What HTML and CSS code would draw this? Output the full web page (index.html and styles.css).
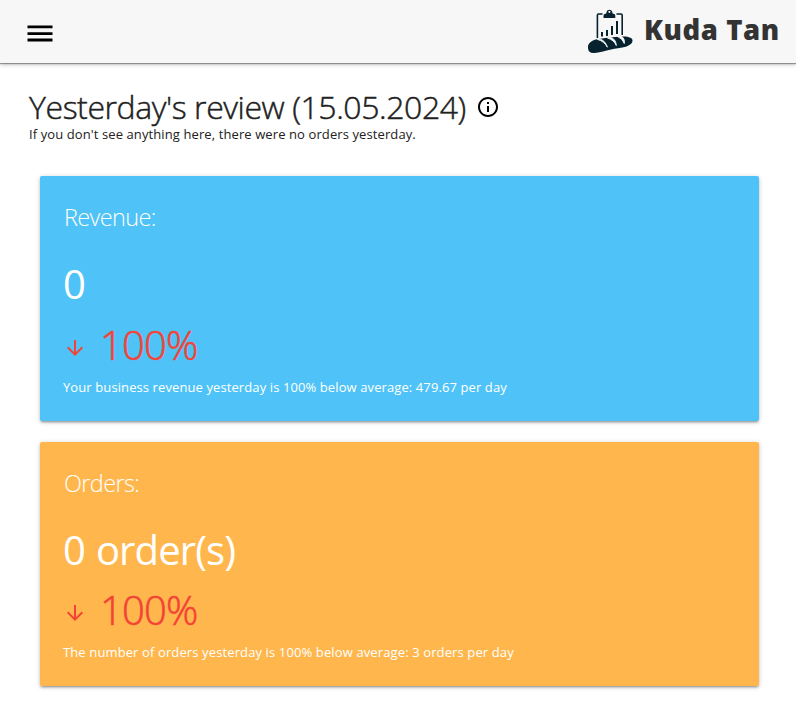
FILE: index.html
```html
<!DOCTYPE html>
<html lang="en">
<head>
<meta charset="utf-8">
<title>Kuda Tan</title>
<link rel="stylesheet" href="styles.css">
</head>
<body>
<header class="navbar">
  <svg class="menu" viewBox="0 0 26 18" width="26" height="18" aria-label="Menu"><path d="M0.5 0.5h25v2.800h-25zM0.5 7.200h25v2.800h-25zM0.5 13.600h25v2.800h-25z"/></svg>
  <div class="brand">
    <svg class="logo" viewBox="0 0 46 46" width="46" height="46" aria-hidden="true">
      <path class="board" d="M15.500 5H11.500Q10.400 5 10.400 6.200V29M29.500 5h4.300Q35.200 5 35.200 6.200V26"/>
      <path class="ink" d="M16.500 9V6.700Q16.500 4.900 18.500 4.800Q19.800 4.600 19.500 3A3 3 0 0 1 25.300 3Q25 4.600 26.300 4.800Q28.300 4.900 28.300 6.700V9ZM22.400 1.700a1.100 1.100 0 1 0 .01 0Z" fill-rule="evenodd"/>
      <path class="ink" d="M14 23h2v4.500h-2zM19 21h2v6h-2zM24 17h2v9h-2zM29 12h2v13h-2z"/>
      <path class="ink" d="M1 39C.5 35 4 31.500 10 30.300C19 28.700 27 28 34 27.500C41 27 46 28.500 45.500 32C45 36 39 38.500 31 39.200C21 40.200 14 43.700 7 44C3 44.200 1.300 42.500 1 39Z"/>
      <path class="cut" d="M10.500 30.500Q17 32 20.400 38.200Q18.500 32 13.500 30.200ZM20.500 29Q27 31 29.300 36.500Q29 30.500 24 28.500ZM30.500 27.500Q35.500 29.500 37.300 34.500Q38 29 34 27.300Z"/>
    </svg>
    <span class="name">Kuda Tan</span>
  </div>
</header>
<main class="page">
  <div class="heading">
    <h1 class="title">Yesterday's review (15.05.2024)</h1>
    <svg class="info" viewBox="0 0 24 24" width="24" height="24" aria-hidden="true"><path d="M11 7h2v2h-2zm0 4h2v6h-2zm1-9C6.480 2 2 6.480 2 12s4.480 10 10 10 10-4.480 10-10S17.520 2 12 2zm0 18c-4.410 0-8-3.590-8-8s3.590-8 8-8 8 3.590 8 8-3.590 8-8 8z"/></svg>
  </div>
  <p class="hint">If you don't see anything here, there were no orders yesterday.</p>
  <section class="card revenue">
    <h2 class="label">Revenue:</h2>
    <p class="value">0</p>
    <div class="change">
      <svg class="arrow" viewBox="0 0 24 24" width="24" height="24" aria-hidden="true"><path d="M20 12l-1.410-1.410L13 16.170V4h-2v12.170l-5.580-5.590L4 12l8 8 8-8z"/></svg>
      <span class="percent">100%</span>
    </div>
    <p class="note">Your business revenue yesterday is 100% below average: 479.67 per day</p>
  </section>
  <section class="card orders">
    <h2 class="label">Orders:</h2>
    <p class="value">0 order(s)</p>
    <div class="change">
      <svg class="arrow" viewBox="0 0 24 24" width="24" height="24" aria-hidden="true"><path d="M20 12l-1.410-1.410L13 16.170V4h-2v12.170l-5.580-5.590L4 12l8 8 8-8z"/></svg>
      <span class="percent">100%</span>
    </div>
    <p class="note">The number of orders yesterday is 100% below average: 3 orders per day</p>
  </section>
</main>
</body>
</html>
```
FILE: styles.css
```css
* { box-sizing: border-box; }
body { margin: 0; background: #fff; color: #212121; font-family: "Open Sans", "Noto Sans", sans-serif; }
h1, h2, p { margin: 0; font-weight: 400; white-space: nowrap; }
svg { display: block; flex: none; }
.navbar { height: 63px; padding: 0 18px 0 27px; background: #f7f7f7; display: flex; align-items: flex-start; justify-content: space-between; box-shadow: 0 1px 1px rgba(0,0,0,.35), 0 2px 4px rgba(0,0,0,.2); }
.menu { margin-top: 25px; }
.brand { display: flex; }
.logo { margin-top: 9px; }
.board { fill: none; stroke: #06222e; stroke-width: 1.6; }
.ink { fill: #06222e; }
.cut { fill: #f7f7f7; stroke: #f7f7f7; stroke-width: .9; }
.name { margin-left: 11px; margin-right: -1px; width: 135px; font-size: 27.5px; line-height: 60px; letter-spacing: .6px; font-weight: 800; color: #333; white-space: nowrap; }
.page { padding: 25px 37px 0 40px; }
.heading { display: flex; height: 38px; margin-left: -11px; }
.title { width: 438px; font-size: 32px; line-height: 38px; font-weight: 300; letter-spacing: -.42px; -webkit-text-stroke: .45px currentColor; }
.info { margin: 7px 0 0 9px; fill: #000; }
.hint { margin: 0 0 33px -11px; font-size: 13px; line-height: 17px; letter-spacing: .1px; }
.card { height: 245px; margin-bottom: 21px; padding: 23px 24px; border-radius: 2px; color: #fff; box-shadow: 0 2px 2px rgba(0,0,0,.14), 0 3px 1px -2px rgba(0,0,0,.12), 0 1px 5px rgba(0,0,0,.2); }
.revenue { background: #4fc3f7; }
.orders { height: 244px; background: #ffb74d; }
.label { font-size: 23.5px; line-height: 36px; font-weight: 300; letter-spacing: -.65px; }
.value { margin: 20px 0 0 -1px; font-size: 40px; line-height: 58px; letter-spacing: -.9px; word-spacing: 1.5px; }
.change { display: flex; margin: 4px 0 0 -1px; height: 54px; color: #f44336; }
.arrow { margin-top: 19px; fill: #f44336; }
.percent { margin-left: 13px; font-size: 40px; line-height: 56px; font-weight: 300; letter-spacing: -.8px; -webkit-text-stroke: .6px currentColor; }
.note { margin: 7px 0 0 -1px; font-size: 13px; line-height: 18px; letter-spacing: .1px; }
.orders .change { margin-top: 3px; }
.orders .note { letter-spacing: .12px; }
```
